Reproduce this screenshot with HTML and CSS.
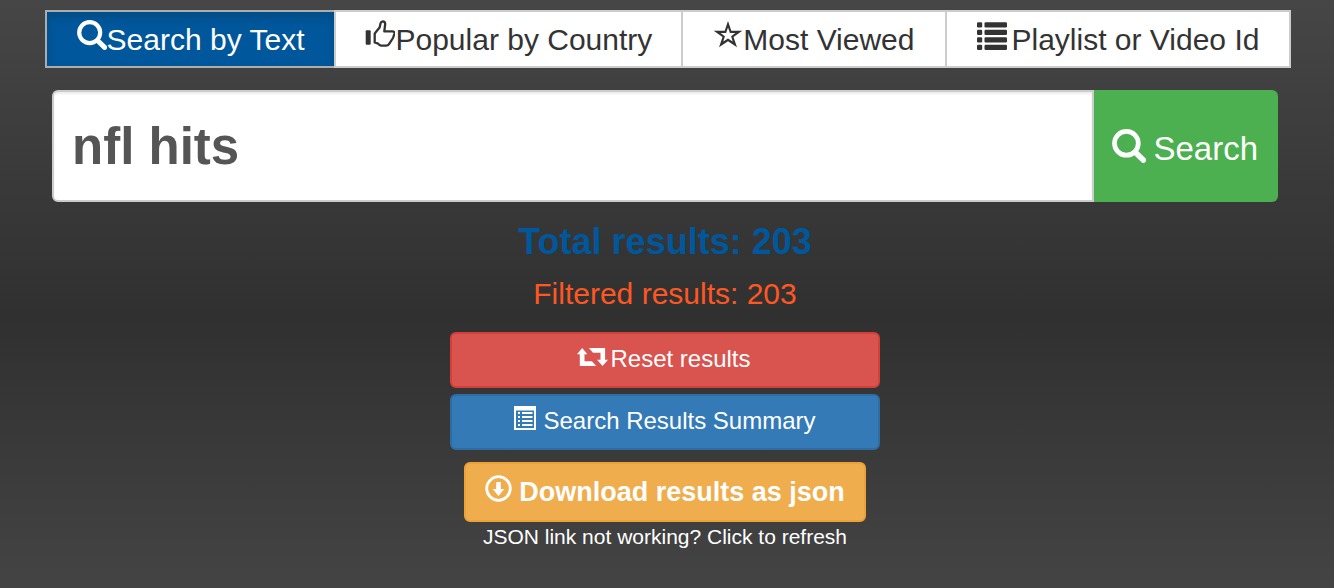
FILE: index.html
```html
<!DOCTYPE html>
<html lang="en">
<head>
<meta charset="utf-8">
<meta name="viewport" content="width=device-width, initial-scale=1">
<title>Video Search</title>
<link rel="stylesheet" href="styles.css">
</head>
<body>
<svg class="sprite" aria-hidden="true">
  <symbol id="search" viewBox="0 0 30 30">
    <circle cx="12.7" cy="12.6" r="10.5" fill="none" stroke="currentColor" stroke-width="4.2"/>
    <path d="M20.5 20.5L27.6 27.4" fill="none" stroke="currentColor" stroke-width="5" stroke-linecap="round"/>
  </symbol>
</svg>
<nav class="tabs" aria-label="Search mode">
  <button class="tab tab-active" type="button"><svg class="icon"><use href="#search"/></svg>Search by Text</button>
  <button class="tab tab-narrow" type="button"><svg class="icon" viewBox="0 0 30 30"><rect x=".7" y="10.3" width="5" height="14.4" rx="1" fill="currentColor"/><path d="M10.3 12.8L14.6 7.5L15.6 3.2Q16.2 1.3 17.8 1.3Q20.2 1.4 20.2 4L19.3 11.4H27.3Q30 11.5 29.3 14L28 18L24 24.2Q23 25.7 21 25.7H16Q14.8 25.5 12.6 23.3L9.7 22.4V13.6Z" fill="none" stroke="currentColor" stroke-width="2.3" stroke-linejoin="round"/></svg>Popular by Country</button>
  <button class="tab tab-wide" type="button"><svg class="icon" viewBox="0 0 30 30"><path fill="currentColor" fill-rule="evenodd" d="M15 1L18.3 10.7H29.3L20.5 17L24 27.3L15 21.2L6 27.3L9.5 17L.7 10.7H11.7ZM15 7.4L16.9 13H22.4L18.1 16.3L19.7 21.6L15 18.4L10.3 21.6L11.9 16.3L7.6 13H13.1Z"/></svg>Most Viewed</button>
  <button class="tab tab-spaced" type="button"><svg class="icon" viewBox="0 0 30 30"><g fill="currentColor"><rect x="0" y="2.3" width="5.2" height="5.2" rx="1.2"/><rect x="7.5" y="2.3" width="22.5" height="5.2" rx="1.2"/><rect x="0" y="9.8" width="5.2" height="5.2" rx="1.2"/><rect x="7.5" y="9.8" width="22.5" height="5.2" rx="1.2"/><rect x="0" y="17.3" width="5.2" height="5.2" rx="1.2"/><rect x="7.5" y="17.3" width="22.5" height="5.2" rx="1.2"/><rect x="0" y="24.8" width="5.2" height="5.2" rx="1.2"/><rect x="7.5" y="24.8" width="22.5" height="5.2" rx="1.2"/></g></svg>Playlist or Video Id</button>
</nav>
<main class="content">
  <form class="search" onsubmit="return false">
    <input class="search-input" type="text" value="nfl hits" aria-label="Search text">
    <button class="search-button" type="submit"><svg class="icon"><use href="#search"/></svg>Search</button>
  </form>
  <h1 class="total">Total results: 203</h1>
  <p class="filtered">Filtered results: 203</p>
  <div class="actions">
    <button class="action action-reset" type="button"><svg class="icon icon-reset" viewBox="0 0 31 18"><g fill="currentColor"><path d="M0 6.3L5.2 0L10.4 6.3H7.5V13.3H15L19.2 18H2.8V6.3Z"/><path d="M11.8 0H28.1V11.8H31L25.6 18L20 11.8H23.5V4.7H16Z"/></g></svg>Reset results</button>
    <button class="action action-summary" type="button"><svg class="icon icon-summary" viewBox="0 0 22 24"><path fill="currentColor" fill-rule="evenodd" d="M0 0H22V24H0ZM2 4.5V22H20V4.5Z"/><path d="M4 7H6M4 11H6M4 15H6M4 19H6M8 7H18.5M8 11H18.5M8 15H18.5M8 19H18.5" fill="none" stroke="currentColor" stroke-width="2"/></svg>Search Results Summary</button>
    <button class="action action-download" type="button"><svg class="icon icon-download" viewBox="0 0 27 27"><circle cx="13.5" cy="13.5" r="11.8" fill="none" stroke="currentColor" stroke-width="2.8"/><path fill="currentColor" d="M11.2 7H15.8V14H19.3L13.5 21L7.7 14H11.2Z"/></svg>Download results as json</button>
    <a class="refresh" href="#">JSON link not working? Click to refresh</a>
  </div>
</main>
</body>
</html>
```
FILE: styles.css
```css
* { box-sizing: border-box; }

html { min-height: 100%; background: linear-gradient(#464646, #303030 54%, #444); }

body {
  margin: 0;
  padding: 10px 0 36px;
  font-family: "Liberation Sans", Arial, sans-serif;
  color: #fff;
}

button, input { font-family: inherit; margin: 0; }
button { cursor: pointer; }

.sprite { position: absolute; width: 0; height: 0; }
.icon { flex: none; width: 30px; height: 30px; }

.tabs { display: flex; justify-content: center; padding-left: 2px; }

.tab {
  display: flex;
  align-items: center;
  height: 58px;
  padding: 2px 30px 0;
  border: 2px solid #ccc;
  background: #fff;
  color: #333;
  font-size: 30px;
  white-space: nowrap;
}
.tab + .tab { margin-left: -2px; }
.tab .icon { margin-bottom: 10px; }
.tab-narrow { padding: 2px 29px 0; }
.tab-wide { padding: 2px 31px 0 30px; }
.tab-spaced { gap: 4px; }
.tab-active {
  background: #01579b;
  border-color: #adadad;
  color: #fff;
  box-shadow: inset 0 6px 10px rgba(0, 0, 0, .125);
}

.content { padding: 22px 56px 0 52px; text-align: center; }

.search { display: flex; height: 112px; }
.search-input {
  flex: 1;
  min-width: 0;
  padding: 0 18px;
  border: 2px solid #ccc;
  border-radius: 6px 0 0 6px;
  background: #fff;
  box-shadow: inset 0 2px 2px rgba(0, 0, 0, .075);
  color: #555;
  font-size: 51px;
  font-weight: bold;
}
.search-button {
  display: flex;
  align-items: center;
  gap: 7px;
  padding: 6px 20px 0 18px;
  border: 0;
  border-radius: 0 6px 6px 0;
  background: #4caf50;
  color: #fff;
  font-size: 33px;
}
.search-button .icon { width: 34px; height: 34px; margin-bottom: 6px; }

.total {
  margin: 20px 0 0;
  color: #01579b;
  font-size: 36px;
  line-height: 40px;
}
.filtered {
  margin: 12px 0 0;
  color: #ff5722;
  font-size: 30px;
  line-height: 40px;
}

.actions { display: flex; flex-direction: column; align-items: center; margin-top: 18px; }
.action {
  display: flex;
  align-items: center;
  justify-content: center;
  width: 430px;
  max-width: 100%;
  height: 56px;
  padding: 0 0 2px;
  border: 2px solid;
  border-radius: 6px;
  color: #fff;
  font-size: 24px;
}
.action-reset { gap: 2px; padding-right: 2px; background: #d9534f; border-color: #d43f3a; }
.action-summary { gap: 7px; margin-top: 6px; background: #337ab7; border-color: #2e6da4; }
.action-download {
  gap: 7px;
  width: 402px;
  height: 60px;
  margin-top: 12px;
  padding: 0;
  background: #f0ad4e;
  border-color: #eea236;
  font-size: 27px;
  font-weight: bold;
}
.icon-reset { width: 31px; height: 18px; margin-bottom: 4px; }
.icon-summary { width: 22px; height: 24px; margin-bottom: 6px; }
.icon-download { width: 27px; height: 27px; margin-bottom: 8px; }

.refresh { color: #fff; font-size: 21px; line-height: 30px; text-decoration: none; }
```
